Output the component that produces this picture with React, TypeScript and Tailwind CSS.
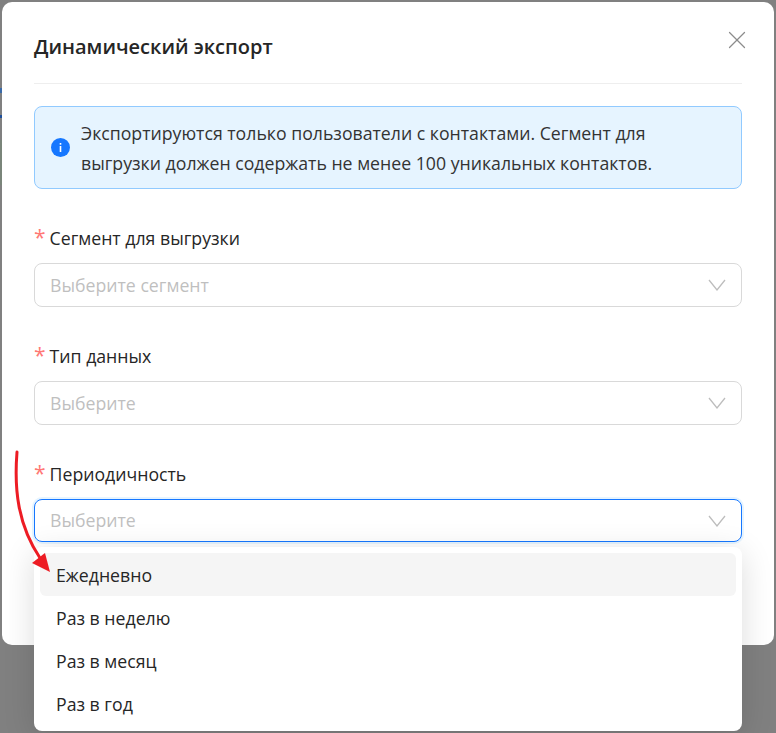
import { X } from 'lucide-react';

function Field({ label, placeholder, focused }: { label: string; placeholder: string; focused?: boolean }) {
  return (
    <div className="mb-[37px]">
      <div className="flex h-[24px] items-center text-[17.7px] text-[#262626]">
        <span className="mr-[4px] mt-[-1px] text-[21px] leading-none text-[#ff7875]">*</span>
        {label}
      </div>
      <div
        className={
          focused
            ? 'mt-[13px] flex h-[43px] items-center justify-between rounded-lg border border-[#1677ff] bg-white pl-[15px] pr-[15px] shadow-[0_0_0_2px_rgba(5,145,255,0.1)]'
            : 'mt-[13px] flex h-[44px] items-center justify-between rounded-lg border border-[#d9d9d9] bg-white pl-[15px] pr-[15px]'
        }
      >
        <span className="text-[17.7px] text-[#bfbfbf]">{placeholder}</span>
        <svg width="18" height="12" viewBox="0 0 18 12" fill="none" stroke="#bdbdbd" strokeWidth="1.3">
          <path d="M1 1l8 10 8-10" />
        </svg>
      </div>
    </div>
  );
}

export default function App() {
  const options = ['Ежедневно', 'Раз в неделю', 'Раз в месяц', 'Раз в год'];

  return (
    <div className="relative h-[733px] w-[776px] overflow-hidden bg-[#808080] pl-[2px] pr-[2px] pt-[2px] font-['Open_Sans','Noto_Sans',sans-serif]">
      {/* bits of the page behind the overlay, visible at the left edge */}
      <div className="absolute left-0 top-[88px] h-[5px] w-[2px] bg-[#3a6aa8]" />
      <div className="absolute left-0 top-[115px] h-[3px] w-[2px] bg-[#1f4f9a]" />
      <div className="absolute left-0 top-[140px] h-[45px] w-[2px] bg-[#7a857a]" />

      <div className="relative h-[643px] rounded-[10px] bg-white px-[32px]">
        <div className="flex h-[82px] items-start justify-between border-b border-[#eeeeee] pt-[29px]">
          <h1 className="text-[20px] font-semibold leading-[32px] text-[#262626]">Динамический экспорт</h1>
          <X className="mr-[-10px] mt-[-6px] text-[#8c8c8c]" size={30} strokeWidth={1} />
        </div>

        <div className="mt-[22px] flex h-[83px] items-center gap-[11px] rounded-lg border border-[#91caff] bg-[#e6f4ff] pl-4 pr-4">
          <svg width="19" height="19" viewBox="0 0 19 19" className="shrink-0">
            <circle cx="9.5" cy="9.5" r="9.5" fill="#1677ff" />
            <rect x="8.7" y="8" width="1.6" height="6" fill="#fff" />
            <rect x="8.7" y="5" width="1.6" height="1.7" fill="#fff" />
          </svg>
          <p className="text-[17.7px] leading-[30px] text-[#333333]">
            Экспортируются только пользователи с контактами. Сегмент для выгрузки должен содержать не менее 100 уникальных контактов.
          </p>
        </div>

        <div className="mt-[37px]">
          <Field label="Сегмент для выгрузки" placeholder="Выберите сегмент" />
          <Field label="Тип данных" placeholder="Выберите" />
          <Field label="Периодичность" placeholder="Выберите" focused />
        </div>
      </div>

      <div className="absolute left-[34px] top-[547px] w-[708px] rounded-lg bg-white p-[6px] shadow-[0_6px_32px_rgba(0,0,0,0.14)]">
        {options.map((o, i) => (
          <div
            key={o}
            className={
              i === 0
                ? 'flex h-[43px] items-center rounded-md bg-[#f5f5f5] px-4 pt-[2px] text-[17.7px] text-[#262626]'
                : 'flex h-[43px] items-center rounded-md px-4 pt-[2px] text-[17.7px] text-[#262626]'
            }
          >
            {o}
          </div>
        ))}
      </div>

      {/* red annotation arrow */}
      <svg className="absolute left-0 top-[440px]" width="60" height="140" viewBox="0 0 60 140" fill="none">
        <path d="M17 12C14 50 18 85 40 118" stroke="#ed1c24" strokeWidth="3" strokeLinecap="round" />
        <path d="M32 123L45 113L50 132Z" fill="#ed1c24" />
      </svg>
    </div>
  );
}
